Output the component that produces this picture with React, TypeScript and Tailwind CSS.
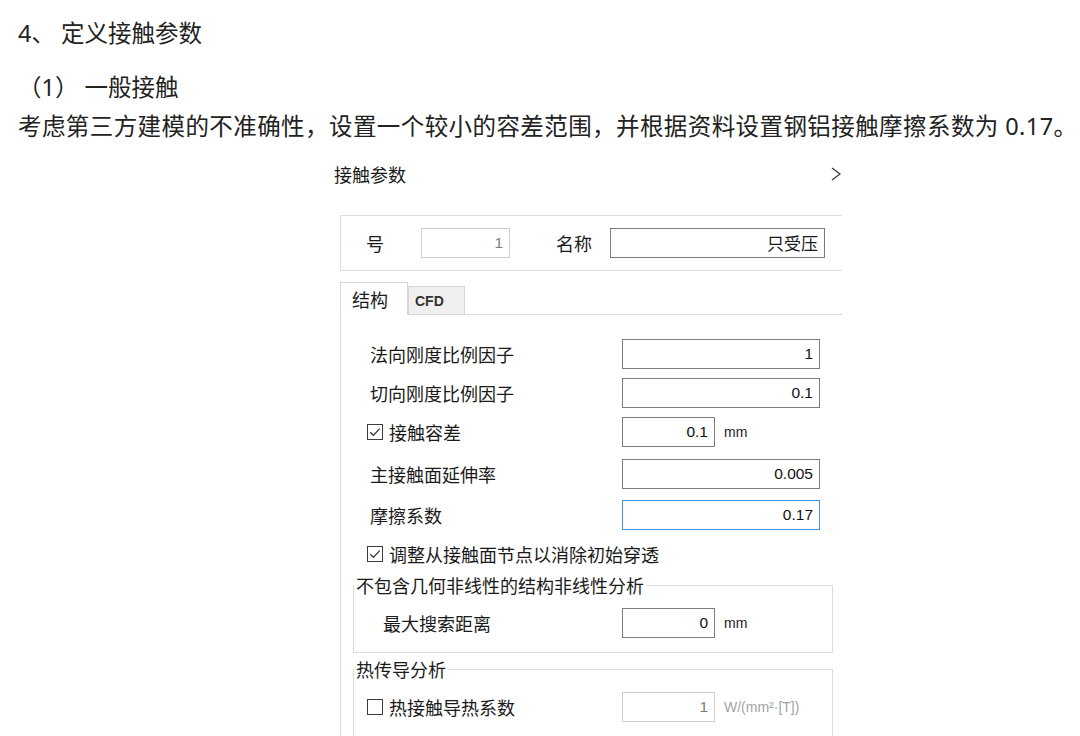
import React from "react";

const cjk = "font-['Noto_Sans_CJK_SC',sans-serif]";
const num = "font-['Liberation_Sans',Arial,sans-serif]";

function Check({ checked }: { checked?: boolean }) {
  return (
    <svg width="16" height="16" viewBox="0 0 16 16" className="shrink-0">
      <rect x="0.5" y="0.5" width="15" height="15" fill="#fff" stroke="#3c3c3c" />
      {checked && (
        <path d="M3.2 8.2 L6.4 11.3 L12.8 4.6" fill="none" stroke="#3c3c3c" strokeWidth="1.3" />
      )}
    </svg>
  );
}

function Field({
  value,
  width = "w-[198px]",
  focused,
  disabled,
}: {
  value: string;
  width?: string;
  focused?: boolean;
  disabled?: boolean;
}) {
  return (
    <div
      className={`${width} h-[30px] shrink-0 flex items-center justify-end pr-[6px] bg-white border ${num} text-[15.5px] ${
        focused
          ? "border-[#3f95e4] text-[#111]"
          : disabled
          ? "border-[#cfcfcf] text-[#7d7d7d]"
          : "border-[#7c7c7c] text-[#111]"
      }`}
    >
      {value}
    </div>
  );
}

function Unit({ children, muted }: { children: React.ReactNode; muted?: boolean }) {
  return (
    <span className={`ml-[9px] ${num} text-[14px] ${muted ? "text-[#a3a3a3]" : "text-[#222]"}`}>
      {children}
    </span>
  );
}

export default function App() {
  return (
    <div className="w-[1080px] h-[736px] overflow-hidden bg-white text-[#222]">
      {/* 正文 */}
      <div className="pl-[18px] pt-[15px] font-['Noto_Sans','Noto_Sans_CJK_SC',sans-serif] text-[23.5px] leading-[36px]">
        <p>4、 定义接触参数</p>
        <p className="mt-[18px]">（1） 一般接触</p>
        <p className="mt-[3px] whitespace-nowrap tracking-[0.42px]">
          考虑第三方建模的不准确性，设置一个较小的容差范围，并根据资料设置钢铝接触摩擦系数为 0.17。
        </p>
      </div>

      {/* 对话框截图 */}
      <div className={`ml-[334px] mt-[16px] w-[508px] overflow-hidden ${cjk} text-[18px] text-[#1a1a1a]`}>
        <div className="h-[28px] flex items-center justify-between pr-[1px]">
          <span className="leading-[28px]">接触参数</span>
          <svg width="10" height="14" viewBox="0 0 10 14">
            <polyline points="1,1 9,7 1,13" fill="none" stroke="#333" strokeWidth="1.2" />
          </svg>
        </div>

        <div className="pl-[6px]">
          {/* 号 / 名称 */}
          <div className="mt-[27px] w-[530px] h-[56px] border border-[#dedede] flex items-center pl-[25px]">
            <span className="leading-none">号</span>
            <div className="ml-[37px]">
              <Field value="1" width="w-[89px]" disabled />
            </div>
            <span className="ml-[46px] leading-none">名称</span>
            <div className="ml-[18px] w-[215px] h-[30px] border border-[#7c7c7c] flex items-center justify-end pr-[6px] text-[17px]">
              只受压
            </div>
          </div>

          {/* 选项卡 */}
          <div className="mt-[11px] h-[33px] flex items-end relative z-10">
            <div className="w-[68px] h-[33px] bg-white border-t border-x border-[#d6d6d6] pl-[11px] flex items-center">
              结构
            </div>
            <div className={`w-[57px] h-[29px] bg-[#f0f0f0] border border-[#d6d6d6] pl-[6px] pt-[2px] flex items-center ${num} text-[14px] font-semibold text-[#333]`}>
              CFD
            </div>
          </div>

          <div className="-mt-px w-[530px] h-[460px] border-t border-l border-[#dcdcdc]">
            <div className="mt-[24px] h-[30px] flex items-center">
              <div className="w-[281px] pl-[29px]">法向刚度比例因子</div>
              <Field value="1" />
            </div>
            <div className="mt-[9px] h-[30px] flex items-center">
              <div className="w-[281px] pl-[29px]">切向刚度比例因子</div>
              <Field value="0.1" />
            </div>
            <div className="mt-[9px] h-[30px] flex items-center">
              <div className="w-[281px] pl-[26px] flex items-center gap-[6px]">
                <Check checked />
                <span>接触容差</span>
              </div>
              <Field value="0.1" width="w-[93px]" />
              <Unit>mm</Unit>
            </div>
            <div className="mt-[12px] h-[30px] flex items-center">
              <div className="w-[281px] pl-[29px]">主接触面延伸率</div>
              <Field value="0.005" />
            </div>
            <div className="mt-[11px] h-[30px] flex items-center">
              <div className="w-[281px] pl-[29px]">摩擦系数</div>
              <Field value="0.17" focused />
            </div>
            <div className="mt-[14px] h-[20px] pl-[26px] flex items-center gap-[6px]">
              <Check checked />
              <span>调整从接触面节点以消除初始穿透</span>
            </div>

            <fieldset className="mt-[10px] ml-[12px] w-[480px] border border-[#dcdcdc] pb-[14px]">
              <legend className="px-[2px] leading-[22px]">不包含几何非线性的结构非线性分析</legend>
              <div className="mt-[12px] h-[30px] flex items-center">
                <div className="w-[268px] pl-[29px]">最大搜索距离</div>
                <Field value="0" width="w-[93px]" />
                <Unit>mm</Unit>
              </div>
            </fieldset>

            <fieldset className="mt-[5px] ml-[12px] w-[480px] border border-[#dcdcdc] pb-[30px]">
              <legend className="px-[2px] leading-[22px]">热传导分析</legend>
              <div className="mt-[12px] h-[30px] flex items-center">
                <div className="w-[268px] pl-[13px] flex items-center gap-[6px]">
                  <Check />
                  <span>热接触导热系数</span>
                </div>
                <Field value="1" width="w-[93px]" disabled />
                <Unit muted>W/(mm²·[T])</Unit>
              </div>
            </fieldset>
          </div>
        </div>
      </div>
    </div>
  );
}
